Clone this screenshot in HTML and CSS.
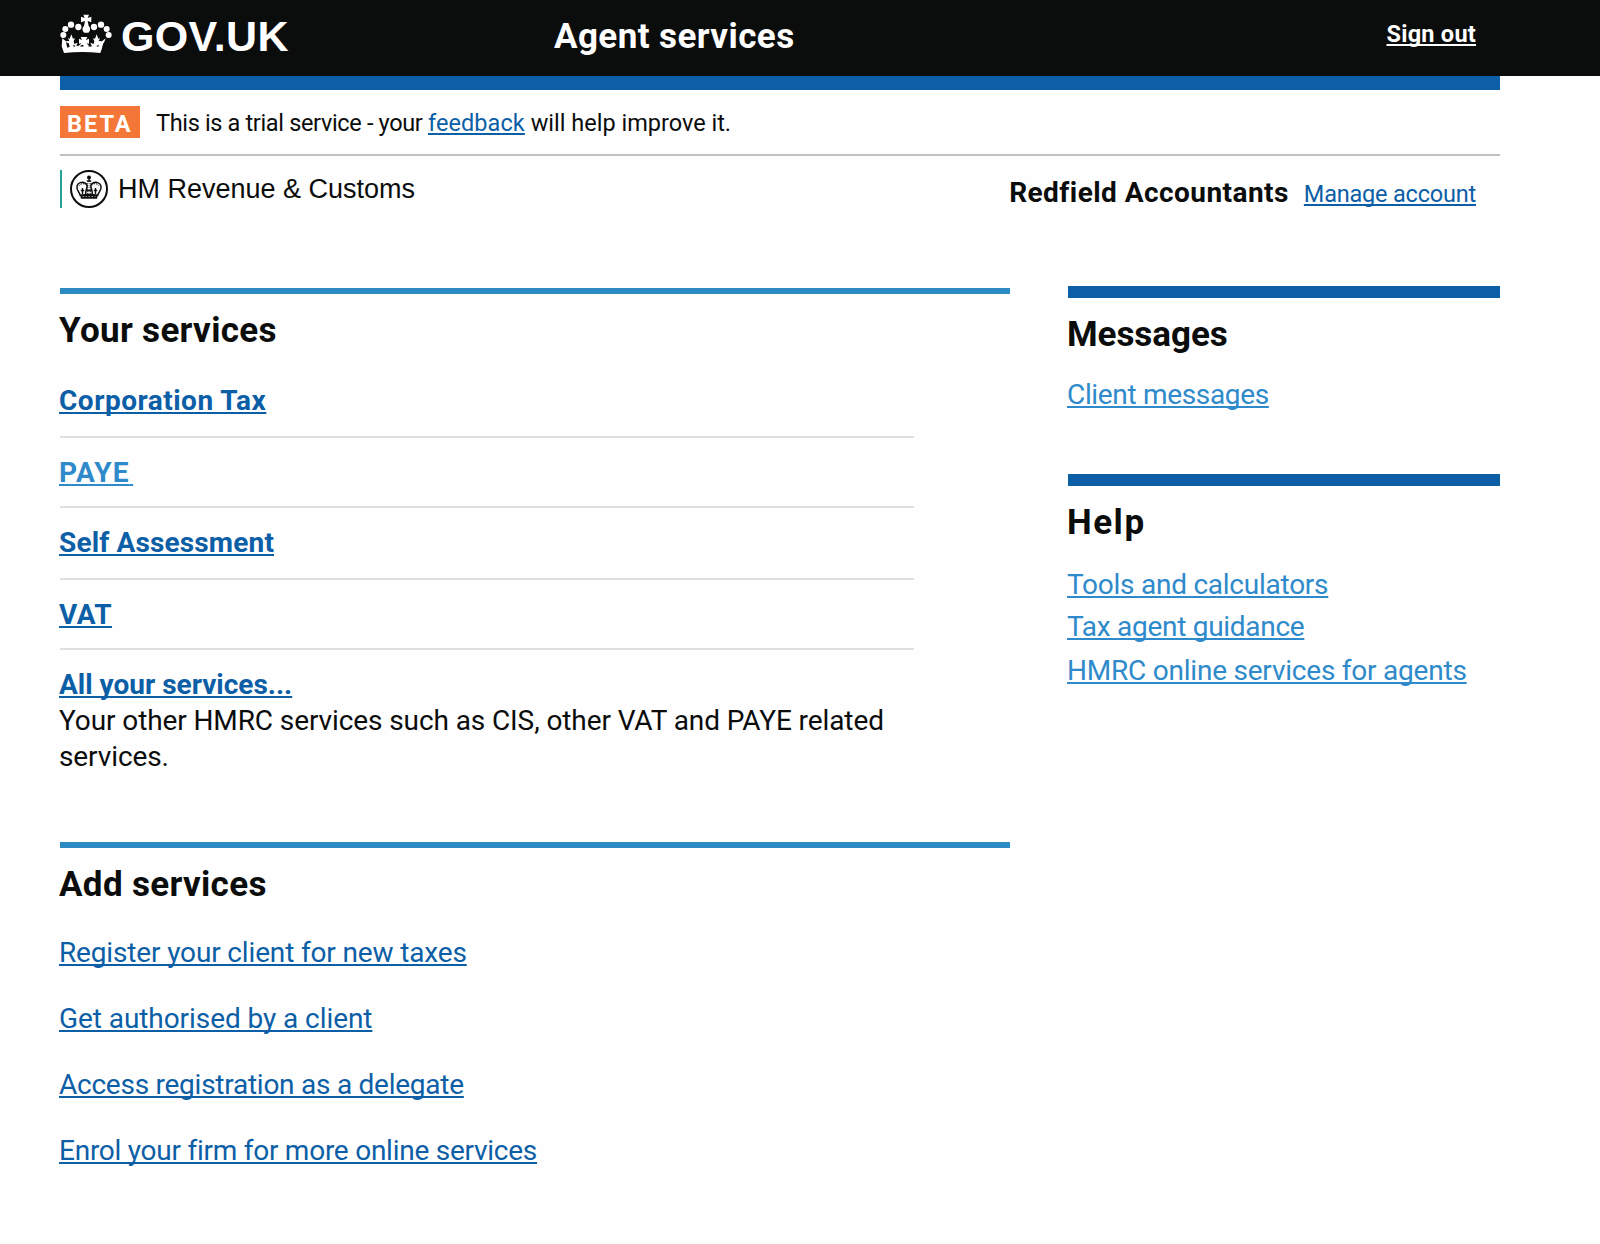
FILE: index.html
```html
<!DOCTYPE html>
<html lang="en">
<head>
<meta charset="utf-8">
<title>Agent services - GOV.UK</title>
<link rel="stylesheet" href="styles.css">
</head>
<body>
<header class="header">
  <div class="header-inner">
    <a class="logo" href="#">
      <svg class="logo-crown" viewBox="60 42 156 120" width="52" height="40" aria-hidden="true">
        <g fill="#fff">
          <circle cx="93" cy="74" r="9.500"/><circle cx="115" cy="81" r="9.500"/><circle cx="162" cy="81" r="9.500"/><circle cx="183" cy="74" r="9.500"/>
          <circle cx="76" cy="87" r="9"/><circle cx="200" cy="87" r="9"/><circle cx="70" cy="105" r="9"/><circle cx="206" cy="105" r="9"/>
          <path d="M130 44h17l-4 10 11-4v17l-11-4 3 15c6 5 6 15-1 20h-12c-7-5-7-15-1-20l3-15-12 4V50l11 4z"/>
          <path d="M67 115l11 9 10-1-4-8 5 1 5-13 5 13 6-1-4 9 2 8 10-4-4 9 6 1 10-8-8 1v-15l9 4-4-9h20l-4 9 9-4v15l-8-1 10 8 6-1-4-9 10 4 2-8-4-9 6 1 5-13 5 13 5-1-4 8 10 1 11-9-9 24-7 20c-36-4-72-4-109 0l-7-20z"/>
        </g>
        <g fill="#0a0b0b">
          <path d="M78 127l8 3 3 10-7 3zM198 127l-8 3-3 10 7 3zM100 134l7 4-6 3zM176 134l-7 4 6 3zM121 137l7-3 4 5-10 1zM155 137l-7-3-4 5 10 1z"/>
        </g>
      </svg>
      <span class="logo-text">GOV.UK</span>
    </a>
    <span class="service-name">Agent services</span>
    <a class="sign-out" href="#">Sign out</a>
  </div>
</header>
<div class="page">
  <div class="phase">
    <strong class="phase-tag">BETA</strong>
    <span class="phase-text">This is a trial service - your <a class="link phase-link" href="#">feedback</a><span class="phase-tail"> will help improve it.</span></span>
  </div>
  <div class="account">
    <div class="org">
      <svg class="org-crest" viewBox="0 0 38 38" width="38" height="38" aria-hidden="true">
        <circle cx="19" cy="19" r="18" fill="none" stroke="#0b0c0c" stroke-width="2"/>
        <g fill="none" stroke="#0b0c0c">
          <path stroke-width="1.500" d="M10.500 26C9.500 22 6.200 20 7 16c1-3.500 5-4.500 8-3 2.500 1.200 2.500 3.500 1.500 6-.8 2-1 4-.7 6M27.500 26c1-4 4.300-6 3.500-10-1-3.500-5-4.500-8-3-2.500 1.200-2.500 3.500-1.500 6 .8 2 1 4 .7 6"/>
          <path stroke-width="1" stroke-dasharray="1.200 .8" d="M9.500 15.500c1-2 4-2.500 6-.8M28.500 15.500c-1-2-4-2.500-6-.8M17.800 13v11M20.200 13v11"/>
          <path stroke-width="1.400" d="M12.500 18v6M10.800 20.500h3.400M25.500 18v6M23.800 20.500h3.400M16.500 20.500h5"/>
        </g>
        <g fill="#0b0c0c">
          <circle cx="19" cy="7.500" r="2"/><path d="M18.400 8h1.200v4h-1.200zM16.800 10.300h4.400v1.500h-4.400z"/>
          <path d="M10 24.500c6-1 12-1 18 0l-1 4.300H11z"/>
        </g>
        <path d="M12.500 26.600h13" stroke="#fff" stroke-width=".6" stroke-dasharray="1.500 1.500"/>
      </svg>
      <span class="org-name">HM Revenue &amp; Customs</span>
    </div>
    <div class="user">
      <strong class="user-name">Redfield Accountants</strong>
      <a class="link user-link" href="#">Manage account</a>
    </div>
  </div>
  <div class="columns">
    <main class="main">
      <section class="panel">
        <h2 class="heading">Your services</h2>
        <ul class="services">
          <li class="service"><a class="link t-corp" href="#">Corporation Tax</a></li>
          <li class="service service-tight"><a class="link link-light t-paye" href="#">PAYE<span class="trail">&nbsp;</span></a></li>
          <li class="service"><a class="link t-self" href="#">Self Assessment</a></li>
          <li class="service service-tight"><a class="link t-vat" href="#">VAT</a></li>
          <li class="service service-last"><a class="link" href="#">All your services...</a>
            <p class="service-note">Your other HMRC services such as CIS, other VAT and PAYE related services.</p></li>
        </ul>
      </section>
      <section class="panel">
        <h2 class="heading">Add services</h2>
        <ul class="actions">
          <li><a class="link t-register" href="#">Register your client for new taxes</a></li>
          <li><a class="link t-authorised" href="#">Get authorised by a client</a></li>
          <li><a class="link t-delegate" href="#">Access registration as a delegate</a></li>
          <li><a class="link t-enrol" href="#">Enrol your firm for more online services</a></li>
        </ul>
      </section>
    </main>
    <aside class="side">
      <section class="side-panel">
        <h2 class="heading t-messages">Messages</h2>
        <ul class="side-links">
          <li><a class="link link-light t-client" href="#">Client messages</a></li>
        </ul>
      </section>
      <section class="side-panel">
        <h2 class="heading t-help">Help</h2>
        <ul class="side-links side-links-help">
          <li><a class="link link-light t-tools" href="#">Tools and calculators</a></li>
          <li><a class="link link-light t-guidance" href="#">Tax agent guidance</a></li>
          <li><a class="link link-light" href="#">HMRC online services for agents</a></li>
        </ul>
      </section>
    </aside>
  </div>
</div>
</body>
</html>
```
FILE: styles.css
```css
* { box-sizing: border-box; }
body {
  margin: 0;
  min-height: 100vh;
  background: #fefefe;
  color: #0b0c0c;
  font: 28px/35px Roboto, "Liberation Sans", sans-serif;
}
ul { list-style: none; margin: 0; padding: 0; }
p, h2 { margin: 0; }
li { display: flow-root; }

.link {
  color: #0c5ea6;
  text-decoration: underline;
  text-decoration-thickness: 2px;
  text-underline-offset: 2px;
  text-decoration-skip-ink: none;
}
.link-light { color: #2e8aca; }

/* Header */
.header { height: 76px; background: #0b0c0c; color: #fff; }
.header-inner {
  display: grid;
  grid-template-columns: 494px 1fr auto;
  width: 1440px;
  margin-left: 60px;
  padding-right: 24px;
}
.logo { display: flex; color: #fff; text-decoration: none; }
.logo-crown { display: block; margin-top: 14px; }
.logo-text {
  margin: 11px 0 0 9px;
  font: bold 43px/50px "Liberation Sans", Arial, sans-serif;
  letter-spacing: .35px;
}
.service-name { padding-top: 16px; font: bold 35px/41px Roboto, sans-serif; letter-spacing: .42px; }
.sign-out {
  padding-top: 20px;
  color: #fff;
  font: bold 23.5px/28px Roboto, sans-serif;
  letter-spacing: .25px;
  text-decoration-thickness: 2px;
  text-underline-offset: 2px;
  text-decoration-skip-ink: none;
}

/* Page */
.page { width: 1440px; margin-left: 60px; border-top: 14px solid #0c5ea6; }
.phase {
  display: flex;
  align-items: center;
  height: 66px;
  border-bottom: 2px solid #bfc1c3;
}
.phase-tag {
  width: 80px;
  height: 32px;
  margin-right: 16px;
  padding: 1px 0 0 7px;
  background: #f47738;
  color: #fff;
  font: bold 23.5px/35px Roboto, sans-serif;
  letter-spacing: 2px;
}
.phase-text { padding-top: 2px; font-size: 23.5px; letter-spacing: -.34px; }
.phase-link { letter-spacing: .08px; }
.phase-tail { letter-spacing: 0; }

.account { display: flex; justify-content: space-between; height: 130px; padding: 14px 24px 0 0; }
.org { display: flex; height: 38px; padding-left: 8px; border-left: 2px solid #28a197; }
.org-name { margin-left: 10px; font: 27px/39px "Liberation Sans", Arial, sans-serif; }
.user { display: flex; align-items: baseline; gap: 15px; padding-top: 5px; }
.user-name { letter-spacing: .45px; }
.user-link { font-size: 23.5px; letter-spacing: -.2px; }

/* Columns */
.columns { display: grid; grid-template-columns: 950px 432px; column-gap: 58px; }
.heading { margin-left: -1px; font: bold 35px/41px Roboto, sans-serif; letter-spacing: .33px; }
.main { padding-top: 2px; }
.panel { padding-top: 16px; border-top: 6px solid #2b8cc4; }
.panel + .panel { margin-top: 67px; }
.services { width: 854px; padding-top: 14px; }
.service {
  padding: 17px 0 18px;
  border-bottom: 2px solid #dee0e2;
  font-weight: bold;
}
.service:first-child { padding-top: 18px; }
.service-tight { padding-bottom: 16px; }
.service-last { padding-bottom: 0; border-bottom: 0; }
.service .link { display: block; width: max-content; margin-left: -1px; }
.service-note { margin: 1px 0 0 -1px; font-weight: 400; line-height: 36px; letter-spacing: -.1px; }
.actions { display: grid; gap: 31px; padding-top: 30px; margin-left: -1px; }

.side-panel { padding-top: 16px; border-top: 12px solid #0c5ea6; }
.side-panel + .side-panel { margin-top: 62px; }
.side-links { margin-left: -1px; padding-top: 22px; letter-spacing: -.22px; }
.side-links-help { padding-top: 24px; }
.side-links-help li + li { margin-top: 7px; }
.side-links-help li:last-child { margin-top: 9px; }

/* Tracking per label */
.t-corp { letter-spacing: .5px; }
.t-vat { letter-spacing: .43px; }
.t-paye { letter-spacing: 1.2px; }
.trail { letter-spacing: -3.5px; }
.t-self { letter-spacing: .15px; }
.t-register { letter-spacing: -.15px; }
.t-authorised { letter-spacing: -.07px; }
.t-delegate { letter-spacing: -.25px; }
.t-enrol { letter-spacing: -.25px; }
.t-messages { letter-spacing: -.05px; }
.t-help { letter-spacing: 1.5px; }
.t-client { letter-spacing: -.33px; }
.t-tools { letter-spacing: -.25px; }
.t-guidance { letter-spacing: -.29px; }
```
